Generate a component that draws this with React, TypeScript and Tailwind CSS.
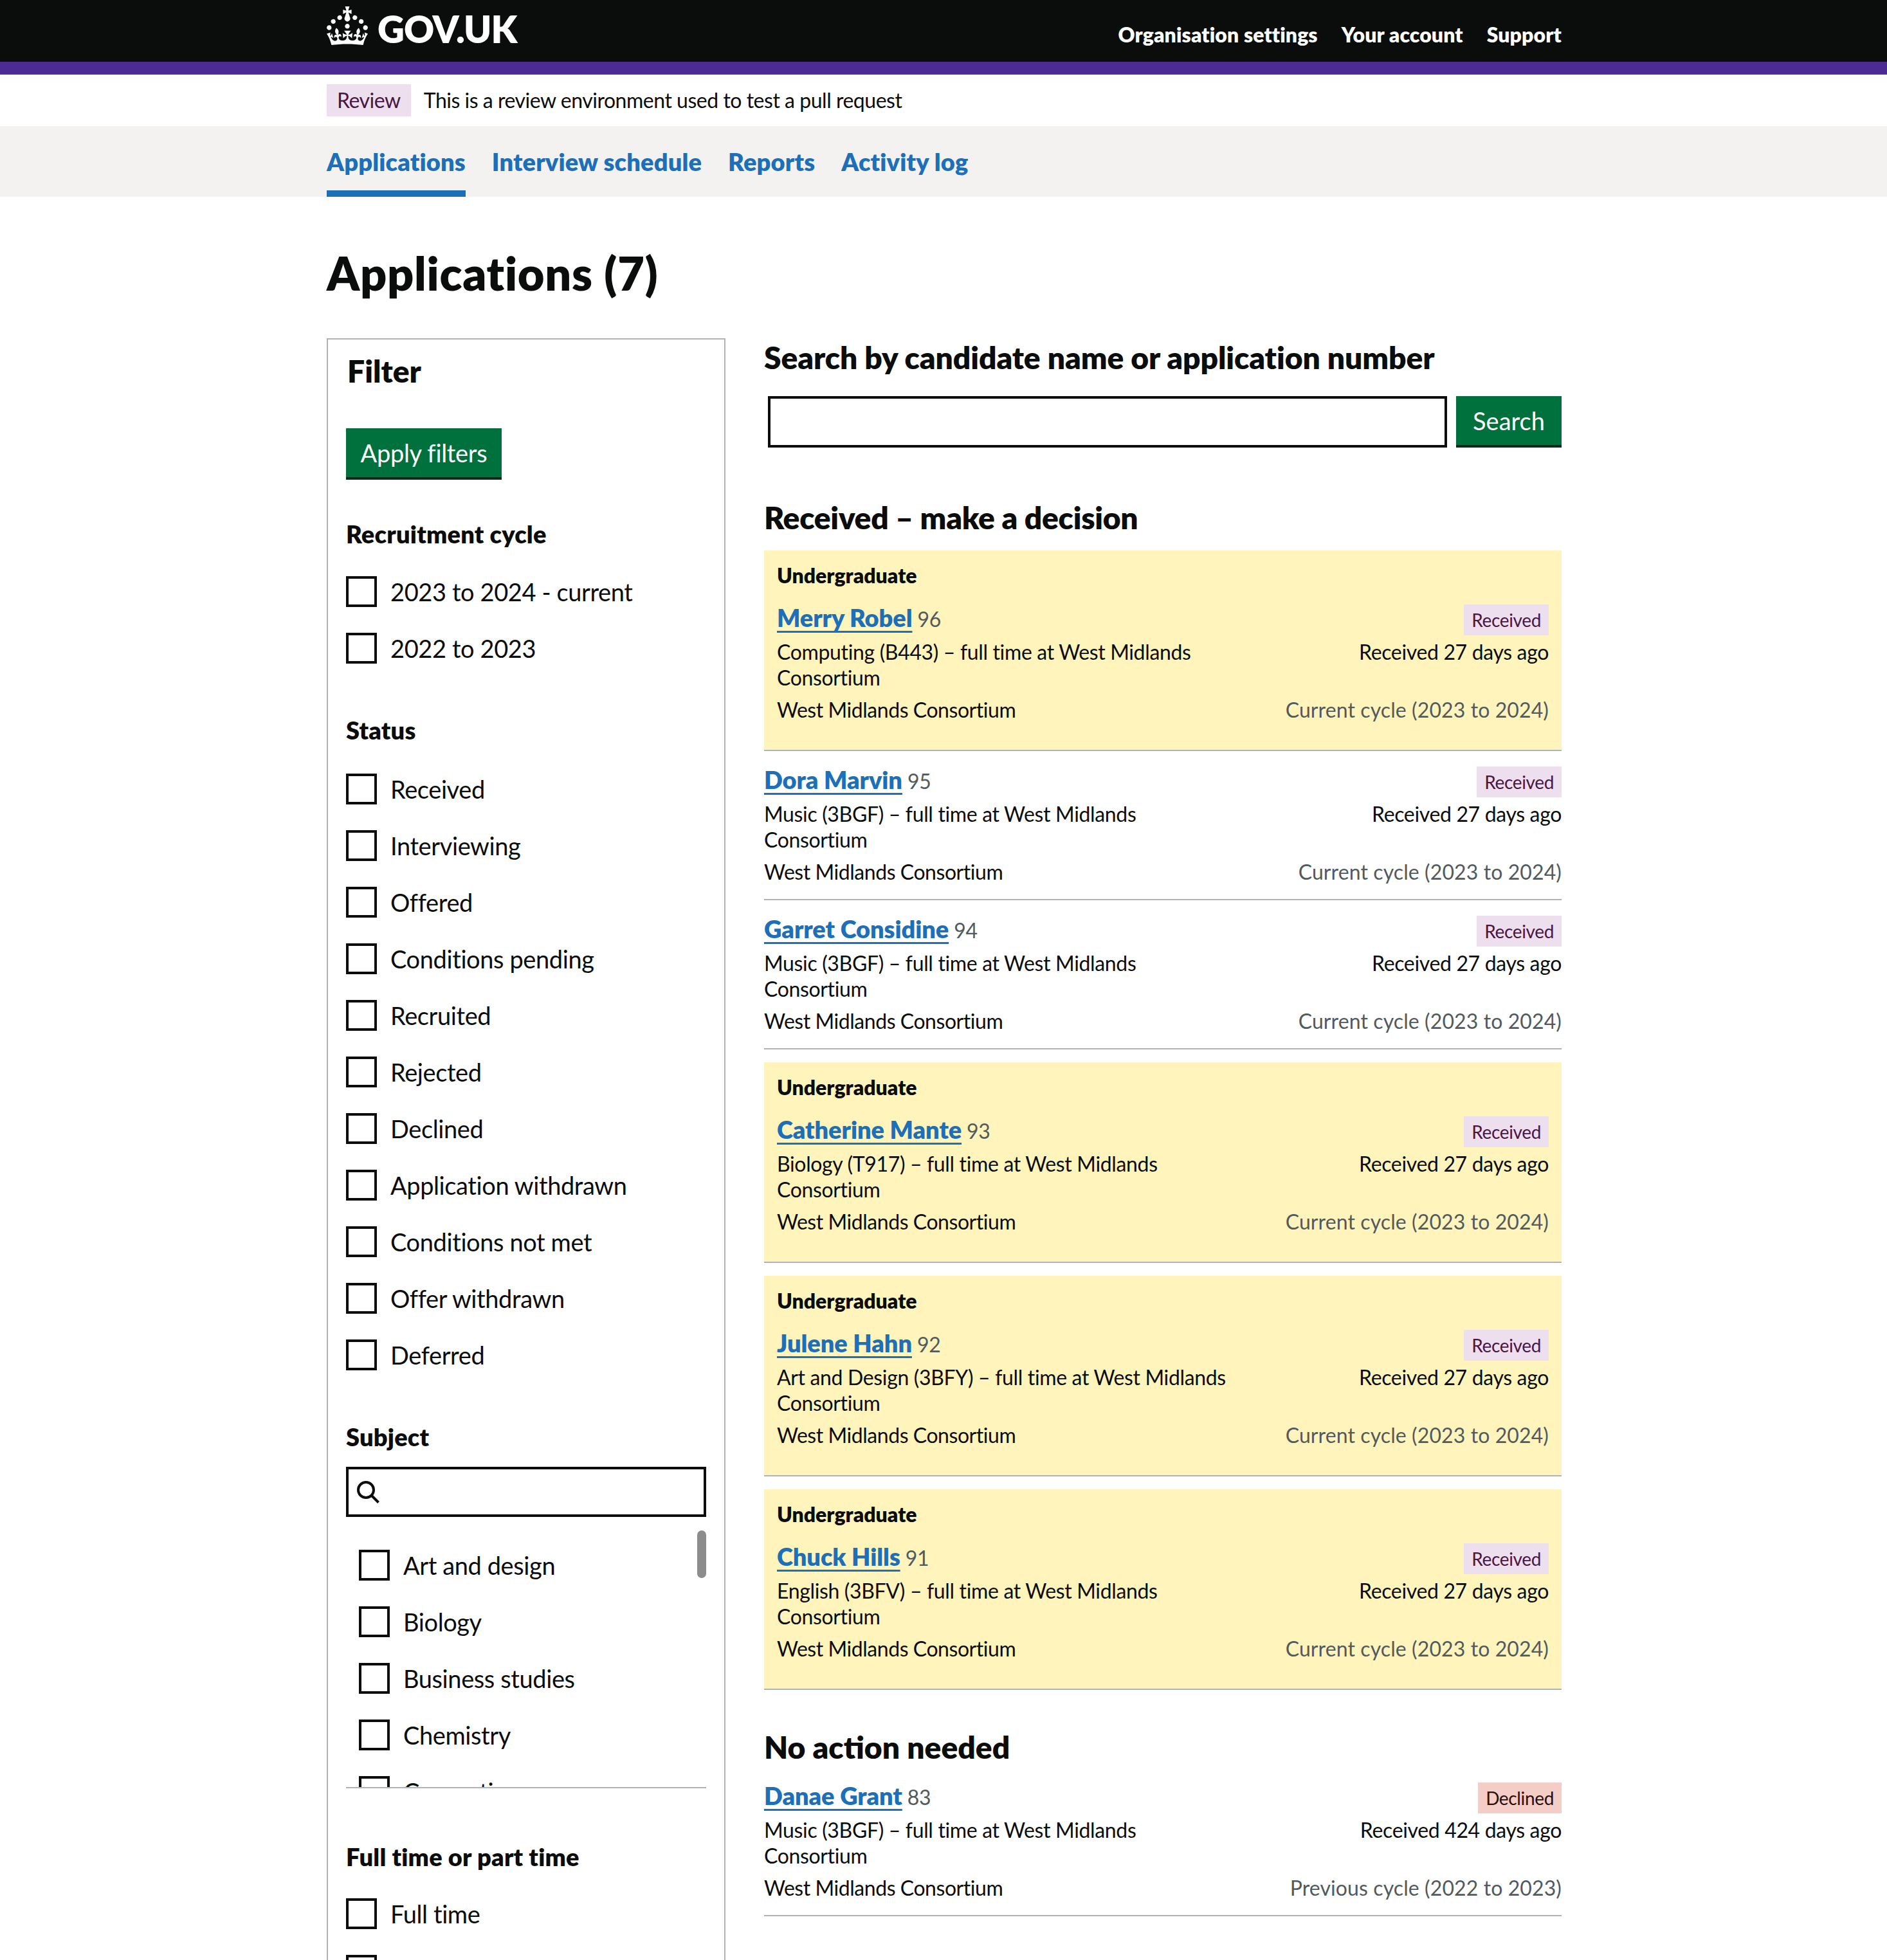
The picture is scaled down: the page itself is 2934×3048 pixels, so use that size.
const font = "font-['Lato',sans-serif]";

const statuses = [
  "Received",
  "Interviewing",
  "Offered",
  "Conditions pending",
  "Recruited",
  "Rejected",
  "Declined",
  "Application withdrawn",
  "Conditions not met",
  "Offer withdrawn",
  "Deferred",
];

const subjects = ["Art and design", "Biology", "Business studies", "Chemistry", "Computing"];

const received = [
  { name: "Merry Robel", id: 96, course: "Computing (B443) – full time at West Midlands", highlight: true },
  { name: "Dora Marvin", id: 95, course: "Music (3BGF) – full time at West Midlands", highlight: false },
  { name: "Garret Considine", id: 94, course: "Music (3BGF) – full time at West Midlands", highlight: false },
  { name: "Catherine Mante", id: 93, course: "Biology (T917) – full time at West Midlands", highlight: true },
  { name: "Julene Hahn", id: 92, course: "Art and Design (3BFY) – full time at West Midlands", highlight: true },
  { name: "Chuck Hills", id: 91, course: "English (3BFV) – full time at West Midlands", highlight: true },
];

function Checkbox({ label }: { label: string }) {
  return (
    <div className="flex h-[48px] items-center mb-[40px]">
      <span className="w-[48px] h-[48px] border-[4px] border-[#0b0c0c] bg-white shrink-0" />
      <span className="ml-[21px] text-[38px] leading-[48px] tracking-[-0.4px] text-[#0b0c0c] whitespace-nowrap">{label}</span>
    </div>
  );
}

interface RowProps {
  name: string;
  id: number;
  course: string;
  tag?: string;
  ago?: string;
  cycle?: string;
}

function Row({ name, id, course, tag = "Received", ago = "Received 27 days ago", cycle = "Current cycle (2023 to 2024)" }: RowProps) {
  return (
    <div className="text-[32px] leading-[40px] tracking-[-0.35px] text-[#0b0c0c]">
      <div className="flex justify-between h-[58px]">
        <div className="h-[52px] flex items-baseline">
          <a className="text-[38px] leading-[48px] font-extrabold tracking-[-0.1px] text-[#1d70b8] underline decoration-[3px] underline-offset-[6px]">{name}</a>
          <span className="ml-[8px] text-[#505a5f]">{id}</span>
        </div>
        <span
          className={
            tag === "Declined"
              ? "mt-[4px] h-[48px] px-[12px] text-[28px] leading-[48px] bg-[#f4cdc6] text-[#2a0b06]"
              : "mt-[4px] h-[48px] px-[12px] text-[28px] leading-[48px] bg-[#eedfee] text-[#491644]"
          }
        >
          {tag}
        </span>
      </div>
      <div className="flex justify-between">
        <div>
          {course}
          <br />
          Consortium
        </div>
        <div className="text-right">{ago}</div>
      </div>
      <div className="flex justify-between mt-[10px]">
        <div className="tracking-[-0.45px]">West Midlands Consortium</div>
        <div className="tracking-[0.1px] text-[#505a5f]">{cycle}</div>
      </div>
    </div>
  );
}

function Crown() {
  return (
    <svg viewBox="0 0 32 30" className="w-[64px] h-[60px] fill-white" aria-hidden="true">
      <path d="M22.6 10.4c-1 .4-2-.1-2.4-1-.4-.9.1-2 1-2.4.9-.4 2 .1 2.4 1s-.1 2-1 2.4m-5.9 6.7c-.9.4-2-.1-2.4-1-.4-.9.1-2 1-2.4.9-.4 2 .1 2.4 1s-.1 2-1 2.4m10.8-3.7c-1 .4-2-.1-2.4-1-.4-.9.1-2 1-2.4.9-.4 2 .1 2.4 1s0 2-1 2.4m3.3 4.8c-1 .4-2-.1-2.4-1-.4-.9.1-2 1-2.4.9-.4 2 .1 2.4 1s-.1 2-1 2.4M17 4.7l2.3 1.2V2.5l-2.3.7-.2-.2.9-3h-3.4l.9 3-.2.2c-.1.1-2.3-.7-2.3-.7v3.4L15 4.7c.1.1.1.2.2.2l-1.3 4c-.1.2-.1.4-.1.6 0 1.1.8 2 1.9 2.2h.7c1-.2 1.9-1.1 1.9-2.2 0-.2 0-.4-.1-.6l-1.3-4c-.1-.1 0-.2.1-.2m-7.6 5.7c.9.4 2-.1 2.4-1 .4-.9-.1-2-1-2.4-.9-.4-2 .1-2.4 1s0 2 1 2.4m-5 3c.9.4 2-.1 2.4-1 .4-.9-.1-2-1-2.4-.9-.4-2 .1-2.4 1s.1 2 1 2.4m-3.2 4.8c.9.4 2-.1 2.4-1 .4-.9-.1-2-1-2.4-.9-.4-2 .1-2.4 1s0 2 1 2.4m14.8 11c4.4 0 8.6.3 12.3.8 1.1-4.5 2.4-7 3.7-8.8l-2.5-.9c.2 1.3.3 1.9 0 2.7-.4-.4-.8-1.1-1.1-2.3l-1.2 4c.7-.5 1.3-.8 2-.9-1.1 2.5-2.6 3.1-3.5 3-1.1-.2-1.7-1.2-1.5-2.1.3-1.2 1.5-1.5 2.1-.1 1.1-2.3-.8-3-2-2.3 1.9-1.9 2.1-3.5.6-5.6-2.1 1.6-2.1 3.2-1.2 5.5-1.2-1.4-3.2-.6-2.5 1.6.9-1.4 2.1-.5 1.9.8-.2 1.1-1.7 2.1-3.5 1.9-2.7-.2-2.9-2.1-2.9-3.6.7-.1 1.9.5 2.9 1.9l.4-4.3c-1.1 1.1-2.1 1.4-3.2 1.4.4-1.2 2.1-3 2.1-3h-5.4s1.7 1.9 2.1 3c-1.1 0-2.1-.2-3.2-1.4l.4 4.3c1-1.4 2.2-2 2.9-1.9-.1 1.5-.2 3.4-2.9 3.6-1.9.2-3.4-.8-3.5-1.9-.2-1.3 1-2.2 1.9-.8.7-2.3-1.2-3-2.5-1.6.9-2.2.9-3.9-1.2-5.5-1.5 2-1.3 3.7.6 5.6-1.2-.7-3.1 0-2 2.3.6-1.4 1.8-1.1 2.1.1.2.9-.3 1.9-1.5 2.1-.9.2-2.4-.5-3.5-3 .6 0 1.2.3 2 .9l-1.2-4c-.3 1.1-.7 1.9-1.1 2.3-.3-.8-.2-1.4 0-2.7l-2.9.9C1.3 23 2.6 25.5 3.7 30c3.7-.5 7.9-.8 12.3-.8" />
    </svg>
  );
}

export default function App() {
  return (
    <div className={`${font} h-[3048px] overflow-hidden bg-white text-[#0b0c0c]`}>
      <header className="h-[116px] bg-[#0b0c0c] border-b-[20px] border-[#4c2c92]">
        <div className="w-[1920px] ml-[508px] h-[96px] flex justify-between">
          <div className="flex items-start pt-[10px]">
            <Crown />
            <span className="ml-[15px] mt-[10px] text-[58px] leading-[50px] font-extrabold tracking-[-1px] text-white">GOV.UK</span>
          </div>
          <nav className="flex gap-[37px] pt-[32px] text-[32px] leading-[44px] font-extrabold tracking-[0.1px] text-white">
            <a>Organisation settings</a>
            <a>Your account</a>
            <a>Support</a>
          </nav>
        </div>
      </header>

      <div className="h-[80px] w-[1920px] ml-[508px] flex items-center tracking-[-0.48px]">
        <span className="h-[50px] px-[16px] bg-[#eedfee] text-[#491644] text-[32px] leading-[50px]">Review</span>
        <span className="ml-[20px] text-[32px]">This is a review environment used to test a pull request</span>
      </div>

      <nav className="h-[110px] bg-[#f3f2f1]">
        <div className="w-[1920px] ml-[508px] flex gap-[41px] text-[38px] font-extrabold tracking-[0.15px] text-[#1d70b8]">
          <a className="h-[110px] pt-[32px] leading-[46px] border-b-[10px] border-[#1d70b8]">Applications</a>
          <a className="pt-[32px] leading-[46px]">Interview schedule</a>
          <a className="pt-[32px] leading-[46px]">Reports</a>
          <a className="pt-[32px] leading-[46px]">Activity log</a>
        </div>
      </nav>

      <main className="w-[1920px] ml-[508px]">
        <h1 className="mt-[78px] text-[72px] leading-[80px] font-extrabold tracking-[0.7px]">Applications (7)</h1>

        <div className="flex mt-[62px]">
          <aside className="w-[620px] shrink-0 h-[2600px] border-[2px] border-[#b1b4b6] px-[28px] pt-[22px]">
            <h2 className="pl-[2px] text-[48px] leading-[54px] font-extrabold">Filter</h2>
            <button className="mt-[62px] h-[80px] w-[242px] bg-[#00703c] border-b-[4px] border-[#002d18] text-[38px] tracking-[-0.3px] text-white">
              Apply filters
            </button>

            <h3 className="mt-[62px] text-[38px] leading-[44px] font-extrabold tracking-[0.2px]">Recruitment cycle</h3>
            <div className="mt-[44px]">
              <Checkbox label="2023 to 2024 - current" />
              <Checkbox label="2022 to 2023" />
            </div>

            <h3 className="mt-[81px] text-[38px] leading-[44px] font-extrabold tracking-[0.2px]">Status</h3>
            <div className="mt-[46px]">
              {statuses.map((s) => (
                <Checkbox key={s} label={s} />
              ))}
            </div>

            <h3 className="mt-[81px] text-[38px] leading-[44px] font-extrabold tracking-[0.2px]">Subject</h3>
            <div className="mt-[25px] w-[560px] h-[78px] border-[4px] border-[#0b0c0c] flex items-center pl-[12px]">
              <svg viewBox="0 0 36 36" className="w-[36px] h-[36px]" fill="none" stroke="#0b0c0c" strokeWidth="4">
                <circle cx="15" cy="15" r="12" />
                <path d="M23.5 23.5l11 11" />
              </svg>
            </div>
            <div className="relative w-[560px] h-[422px] pl-[20px] pt-[51px] overflow-hidden border-b-[2px] border-[#b1b4b6]">
              {subjects.map((s) => (
                <Checkbox key={s} label={s} />
              ))}
              <span className="absolute right-0 top-[21px] w-[14px] h-[74px] rounded-[7px] bg-[#8c8c8c]" />
            </div>

            <h3 className="mt-[84px] text-[38px] leading-[44px] font-extrabold tracking-[0.2px]">Full time or part time</h3>
            <div className="mt-[43px]">
              <Checkbox label="Full time" />
              <Checkbox label="Part time" />
            </div>
          </aside>

          <section className="ml-[60px] w-[1240px] pt-[3px]">
            <h2 className="text-[48px] leading-[54px] font-extrabold tracking-[-0.1px]">Search by candidate name or application number</h2>
            <div className="mt-[33px] flex items-start pl-[6px]">
              <div className="w-[1056px] h-[80px] border-[4px] border-[#0b0c0c]" />
              <button className="ml-[14px] w-[164px] h-[80px] bg-[#00703c] border-b-[4px] border-[#002d18] text-[38px] text-white">
                Search
              </button>
            </div>

            <h2 className="mt-[82px] text-[48px] leading-[54px] font-extrabold tracking-[-0.3px]">Received – make a decision</h2>
            <div className="mt-[24px]">
              {received.map((r) =>
                r.highlight ? (
                  <div key={r.id} className="mb-[20px] h-[312px] bg-[#fff4bb] border-b-[2px] border-[#b1b4b6] px-[20px] pt-[19px]">
                    <div className="h-[61px] text-[32px] leading-[40px] font-extrabold">Undergraduate</div>
                    <Row name={r.name} id={r.id} course={r.course} />
                  </div>
                ) : (
                  <div key={r.id} className="mb-[20px] h-[212px] border-b-[2px] border-[#b1b4b6]">
                    <Row name={r.name} id={r.id} course={r.course} />
                  </div>
                ),
              )}
            </div>

            <h2 className="mt-[62px] text-[48px] leading-[54px] font-extrabold">No action needed</h2>
            <div className="mt-[24px] h-[212px] border-b-[2px] border-[#b1b4b6]">
              <Row
                name="Danae Grant"
                id={83}
                course="Music (3BGF) – full time at West Midlands"
                tag="Declined"
                ago="Received 424 days ago"
                cycle="Previous cycle (2022 to 2023)"
              />
            </div>
          </section>
        </div>
      </main>
    </div>
  );
}
